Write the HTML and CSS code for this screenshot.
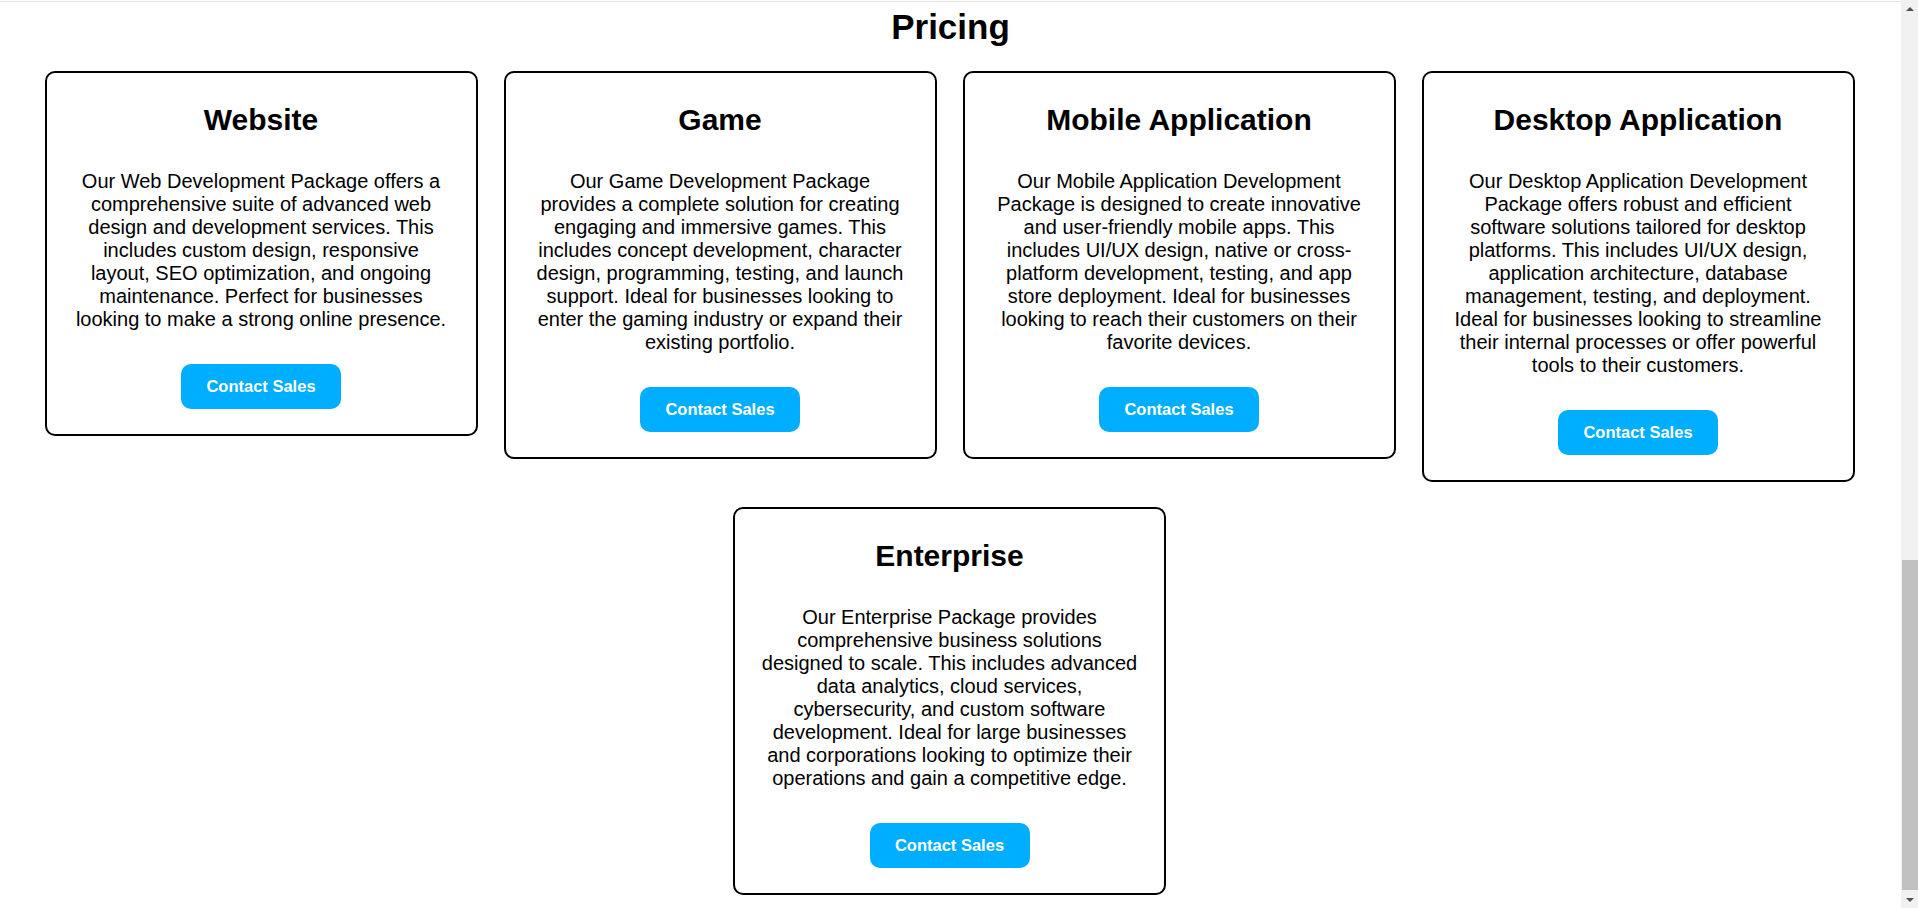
FILE: index.html
```html
<!DOCTYPE html>
<html lang="en">
<head>
<meta charset="utf-8">
<title>Pricing</title>
<link rel="stylesheet" href="styles.css">
</head>
<body>
<main class="page">
  <div class="topline"></div>
  <h1 class="page-title">Pricing</h1>
  <section class="cards">
    <article class="card">
      <h2 class="card-title">Website</h2>
      <p class="card-text">Our Web Development Package offers a comprehensive suite of advanced web design and development services. This includes custom design, responsive layout, SEO optimization, and ongoing maintenance. Perfect for businesses looking to make a strong online presence.</p>
      <button class="cta">Contact Sales</button>
    </article>
    <article class="card">
      <h2 class="card-title">Game</h2>
      <p class="card-text">Our Game Development Package provides a complete solution for creating engaging and immersive games. This includes concept development, character design, programming, testing, and launch support. Ideal for businesses looking to enter the gaming industry or expand their existing portfolio.</p>
      <button class="cta">Contact Sales</button>
    </article>
    <article class="card">
      <h2 class="card-title">Mobile Application</h2>
      <p class="card-text">Our Mobile Application Development Package is designed to create innovative and user-friendly mobile apps. This includes UI/UX design, native or cross-platform development, testing, and app store deployment. Ideal for businesses looking to reach their customers on their favorite devices.</p>
      <button class="cta">Contact Sales</button>
    </article>
    <article class="card">
      <h2 class="card-title">Desktop Application</h2>
      <p class="card-text">Our Desktop Application Development Package offers robust and efficient software solutions tailored for desktop platforms. This includes UI/UX design, application architecture, database management, testing, and deployment. Ideal for businesses looking to streamline their internal processes or offer powerful tools to their customers.</p>
      <button class="cta">Contact Sales</button>
    </article>
    <article class="card">
      <h2 class="card-title">Enterprise</h2>
      <p class="card-text">Our Enterprise Package provides comprehensive business solutions designed to scale. This includes advanced data analytics, cloud services, cybersecurity, and custom software development. Ideal for large businesses and corporations looking to optimize their operations and gain a competitive edge.</p>
      <button class="cta">Contact Sales</button>
    </article>
  </section>
</main>
<aside class="scrollbar" aria-hidden="true">
  <div class="sb-btn"><span class="arrow-up"></span></div>
  <div class="sb-track"><div class="sb-thumb"></div></div>
  <div class="sb-btn"><span class="arrow-down"></span></div>
</aside>
</body>
</html>
```

FILE: styles.css
```css
html, body {
  margin: 0;
  padding: 0;
  height: 100%;
  overflow: hidden;
  background: #ffffff;
}

body {
  display: flex;
  font-family: "Liberation Sans", Arial, sans-serif;
  color: #000000;
}

.page {
  flex: 1;
  min-width: 0;
  display: flex;
  flex-direction: column;
  align-items: center;
}

.topline {
  align-self: stretch;
  height: 1px;
  margin-top: 1px;
  background: #e3e3e3;
}

.page-title {
  margin: 5px 0 24px;
  font-size: 35px;
  font-weight: bold;
  line-height: normal;
}

.cards {
  align-self: stretch;
  box-sizing: border-box;
  padding-right: 2px;
  display: flex;
  flex-wrap: wrap;
  justify-content: center;
  align-items: flex-start;
  gap: 25px 26px;
}

.card {
  box-sizing: border-box;
  width: 433px;
  border: 2px solid #000000;
  border-radius: 10px;
  padding: 30px 26px 25px;
  display: flex;
  flex-direction: column;
  align-items: center;
  text-align: center;
}

.card-title {
  margin: 0;
  font-size: 30px;
  font-weight: bold;
  line-height: normal;
}

.card-text {
  margin: 33px 0 33px;
  font-size: 20px;
  line-height: normal;
}

.cta {
  width: 160px;
  height: 45px;
  border: none;
  border-radius: 10px;
  background: #00aeff;
  color: #ffffff;
  font-family: "Liberation Sans", Arial, sans-serif;
  font-size: 16.5px;
  font-weight: bold;
  padding: 0;
  cursor: pointer;
}

.scrollbar {
  width: 17px;
  flex: none;
  display: flex;
  flex-direction: column;
  background: #f1f1f1;
}

.sb-btn {
  height: 17px;
  display: flex;
  align-items: center;
  justify-content: center;
}

.arrow-up {
  width: 0;
  height: 0;
  border-left: 4px solid transparent;
  border-right: 4px solid transparent;
  border-bottom: 4px solid #505050;
}

.arrow-down {
  width: 0;
  height: 0;
  border-left: 4px solid transparent;
  border-right: 4px solid transparent;
  border-top: 4px solid #505050;
}

.sb-track {
  flex: 1;
  display: flex;
  flex-direction: column;
  justify-content: flex-end;
}

.sb-thumb {
  height: 330px;
  margin: 0 0 1px 1px;
  background: #c1c1c1;
}
```
